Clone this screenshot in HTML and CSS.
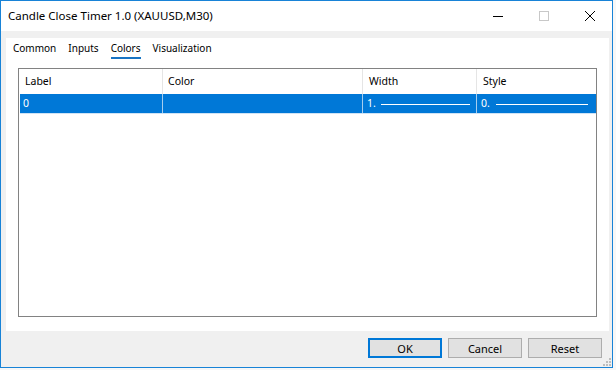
FILE: index.html
```html
<!DOCTYPE html>
<html lang="en">
<head>
    <meta charset="UTF-8">
    <title>Candle Close Timer 1.0 (XAUUSD,M30)</title>
    <link rel="stylesheet" href="styles.css">
</head>
<body>
    <div class="window">
        <div class="titlebar">
            <span class="title">Candle Close Timer 1.0 (XAUUSD,M30)</span>
            <div class="controls">
                <svg class="ctl" width="46" height="30" viewBox="0 0 46 30"><line x1="19" y1="15.5" x2="29" y2="15.5" stroke="#000" stroke-width="1"/></svg>
                <svg class="ctl" width="46" height="30" viewBox="0 0 46 30"><rect x="19.5" y="10.5" width="9" height="9" fill="none" stroke="#c8c8c8" stroke-width="1"/></svg>
                <svg class="ctl" width="46" height="30" viewBox="0 0 46 30"><path d="M19 10 L29 20 M29 10 L19 20" stroke="#000" stroke-width="1"/></svg>
            </div>
        </div>
        <div class="body">
            <div class="panel">
                <div class="tabs">
                    <span class="tab">Common</span>
                    <span class="tab">Inputs</span>
                    <span class="tab active">Colors</span>
                    <span class="tab">Visualization</span>
                </div>
                <div class="grid">
                    <div class="row head">
                        <div class="cell c1">Label</div>
                        <div class="cell c2">Color</div>
                        <div class="cell c3">Width</div>
                        <div class="cell c4">Style</div>
                    </div>
                    <div class="row sel">
                        <div class="cell c1">0</div>
                        <div class="cell c2"></div>
                        <div class="cell c3">1. <span class="line"></span></div>
                        <div class="cell c4">0. <span class="line"></span></div>
                    </div>
                </div>
            </div>
            <div class="buttons">
                <button class="btn default">OK</button>
                <button class="btn">Cancel</button>
                <button class="btn">Reset</button>
            </div>
            <svg class="grip" width="9" height="9" viewBox="0 0 9 9">
                <rect x="7" y="1" width="2" height="2" fill="#bdbdbd"/>
                <rect x="4" y="4" width="2" height="2" fill="#bdbdbd"/>
                <rect x="7" y="4" width="2" height="2" fill="#bdbdbd"/>
                <rect x="1" y="7" width="2" height="2" fill="#bdbdbd"/>
                <rect x="4" y="7" width="2" height="2" fill="#bdbdbd"/>
                <rect x="7" y="7" width="2" height="2" fill="#bdbdbd"/>
            </svg>
        </div>
    </div>
</body>
</html>
```

FILE: styles.css
```css
body { margin: 0; background: #f7f7f7; font-family: "Noto Sans", "Liberation Sans", sans-serif; font-size: 10.5px; color: #000; }
.window { width: 611px; height: 366px; border: 1px solid #1883d7; background: #f0f0f0; display: flex; flex-direction: column; }
.titlebar { height: 30px; background: #fff; display: flex; align-items: center; justify-content: space-between; }
.title { padding-left: 7px; font-size: 11.5px; margin-top: -2px; }
.controls { display: flex; }
.ctl { display: block; }

.body { flex: 1; position: relative; padding: 7px 3px 0 5px; display: flex; flex-direction: column; }
.panel { height: 293px; background: #fff; padding: 0 12px 0 12px; box-sizing: border-box; }
.tabs { display: flex; gap: 12px; padding: 3px 0 0 0; margin-left: -5px; height: 30px; box-sizing: border-box; font-size: 10px; }
.tab { height: 16px; line-height: 14px; }
.tab.active { border-bottom: 2px solid #1874c4; }

.grid { border: 1px solid #828282; height: 247px; }
.row { display: flex; }
.head { height: 25px; }
.head .cell { border-right: 1px solid #e5e5e5; line-height: 25px; padding-left: 6px; }
.head .c2 { padding-left: 5px; }
.head .c4 { border-right: none; }
.sel { height: 19px; background: #0078d7; color: #fff; margin-left: 1px; border-bottom: 1px solid #cfe3f5; }
.sel .cell { border-right: 1px solid #a6cdee; line-height: 19px; padding-left: 4px; display: flex; align-items: center; }
.sel .c1 { padding-left: 3px; width: 143px; }
.sel .c4 { border-right: none; }
.cell { box-sizing: border-box; white-space: nowrap; overflow: hidden; }
.c1 { width: 144px; }
.c2 { width: 200px; }
.c3 { width: 114px; }
.c4 { width: 118px; }
.line { display: inline-block; height: 1px; background: #fff; width: 89px; margin-left: 5px; margin-top: 1px; }
.c4 .line { width: 92px; margin-left: 6px; }

.buttons { display: flex; justify-content: flex-end; gap: 6px; padding: 7px 7px 0 0; }
.btn { width: 74px; height: 20px; box-sizing: border-box; background: #e1e1e1; border: 1px solid #adadad; font-family: inherit; font-size: 11px; padding: 0; color: #000; }
.btn.default { border: 2px solid #0078d7; }
.grip { position: absolute; right: 1px; bottom: 1px; }
```
